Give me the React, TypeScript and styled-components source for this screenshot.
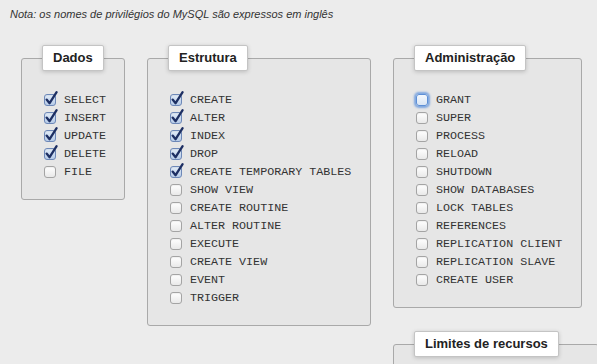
import styled, { createGlobalStyle, css } from "styled-components";

const GlobalStyle = createGlobalStyle`
  html, body {
    margin: 0;
    padding: 0;
    background: #ececec;
    overflow: hidden;
  }
  body {
    font-family: "Liberation Sans", Arial, sans-serif;
    color: #333;
  }
`;

const Page = styled.div`
  padding: 7px 10px 0 10px;
`;

const Note = styled.p`
  margin: 0;
  font-size: 11px;
  line-height: 14px;
  font-style: italic;
  color: #333;
`;

const Groups = styled.div`
  display: grid;
  grid-template-columns: 104px 224px 189px;
  column-gap: 22px;
  align-items: start;
  margin: 24px 0 0 11px;
`;

const Column = styled.div`
  display: flex;
  flex-direction: column;
  gap: 23px;
`;

const Fieldset = styled.fieldset<{ $wide?: boolean }>`
  margin: 0;
  padding: 20px 0 18px 22px;
  min-width: 0;
  border: 1px solid #a9a9a9;
  border-radius: 3px;
  background: #e6e6e6;
  ${({ $wide }) =>
    $wide &&
    css`
      width: 182px;
      padding-bottom: 0;
    `}
`;

const Legend = styled.legend`
  margin-left: -2px;
  padding: 5px 10px;
  line-height: 14px;
  font-size: 13px;
  font-weight: bold;
  color: #222;
  background: #fff;
  border: 1px solid #c4c4c4;
  border-radius: 2px;
  box-shadow: 0 1px 4px rgba(0, 0, 0, 0.18);
`;

const List = styled.ul`
  margin: 0;
  padding: 0;
  list-style: none;
`;

const Row = styled.li`
  display: flex;
  align-items: center;
  height: 18px;
  gap: 8px;
`;

const Box = styled.span<{ $checked?: boolean; $focused?: boolean }>`
  position: relative;
  flex: none;
  width: 12px;
  height: 12px;
  box-sizing: border-box;
  border: 1px solid #a4a4a4;
  border-radius: 3px;
  background: linear-gradient(#ffffff, #e9e9e9);
  box-shadow: inset 0 1px 1px rgba(0, 0, 0, 0.06);
  ${({ $checked }) =>
    $checked &&
    css`
      border-color: #6d88b8;
      background: linear-gradient(#e2ecf8, #b6cbe8);
    `}
  ${({ $focused }) =>
    $focused &&
    css`
      border-color: #5d8fd6;
      background: linear-gradient(#f4f8fd, #d9e5f4);
      box-shadow: 0 0 2px 2px rgba(92, 146, 222, 0.75);
    `}
`;

const Tick = styled.svg`
  position: absolute;
  left: -1px;
  top: -4px;
  width: 14px;
  height: 15px;
  overflow: visible;
`;

const Label = styled.span`
  font-family: "Courier New", "Liberation Mono", monospace;
  font-size: 11.7px;
  color: #333;
  white-space: nowrap;
`;

type Priv = { name: string; checked?: boolean; focused?: boolean };

function Check({ name, checked, focused }: Priv) {
  return (
    <Row>
      <Box $checked={checked} $focused={focused}>
        {checked && (
          <Tick viewBox="0 0 14 15">
            <path
              d="M2.6 8.6 L5.6 12.2 L12.6 1.2"
              fill="none"
              stroke="#1d2f63"
              strokeWidth="2.3"
              strokeLinecap="round"
              strokeLinejoin="round"
            />
          </Tick>
        )}
      </Box>
      <Label>{name}</Label>
    </Row>
  );
}

function Group({ title, items }: { title: string; items: Priv[] }) {
  return (
    <Fieldset>
      <Legend>{title}</Legend>
      <List>
        {items.map((p) => (
          <Check key={p.name} {...p} />
        ))}
      </List>
    </Fieldset>
  );
}

const dados: Priv[] = [
  { name: "SELECT", checked: true },
  { name: "INSERT", checked: true },
  { name: "UPDATE", checked: true },
  { name: "DELETE", checked: true },
  { name: "FILE" },
];

const estrutura: Priv[] = [
  { name: "CREATE", checked: true },
  { name: "ALTER", checked: true },
  { name: "INDEX", checked: true },
  { name: "DROP", checked: true },
  { name: "CREATE TEMPORARY TABLES", checked: true },
  { name: "SHOW VIEW" },
  { name: "CREATE ROUTINE" },
  { name: "ALTER ROUTINE" },
  { name: "EXECUTE" },
  { name: "CREATE VIEW" },
  { name: "EVENT" },
  { name: "TRIGGER" },
];

const admin: Priv[] = [
  { name: "GRANT", focused: true },
  { name: "SUPER" },
  { name: "PROCESS" },
  { name: "RELOAD" },
  { name: "SHUTDOWN" },
  { name: "SHOW DATABASES" },
  { name: "LOCK TABLES" },
  { name: "REFERENCES" },
  { name: "REPLICATION CLIENT" },
  { name: "REPLICATION SLAVE" },
  { name: "CREATE USER" },
];

export default function App() {
  return (
    <Page>
      <GlobalStyle />
      <Note>Nota: os nomes de privilégios do MySQL são expressos em inglês</Note>
      <Groups>
        <Group title="Dados" items={dados} />
        <Group title="Estrutura" items={estrutura} />
        <Column>
          <Group title="Administração" items={admin} />
          <Fieldset $wide>
            <Legend>Limites de recursos</Legend>
          </Fieldset>
        </Column>
      </Groups>
    </Page>
  );
}
